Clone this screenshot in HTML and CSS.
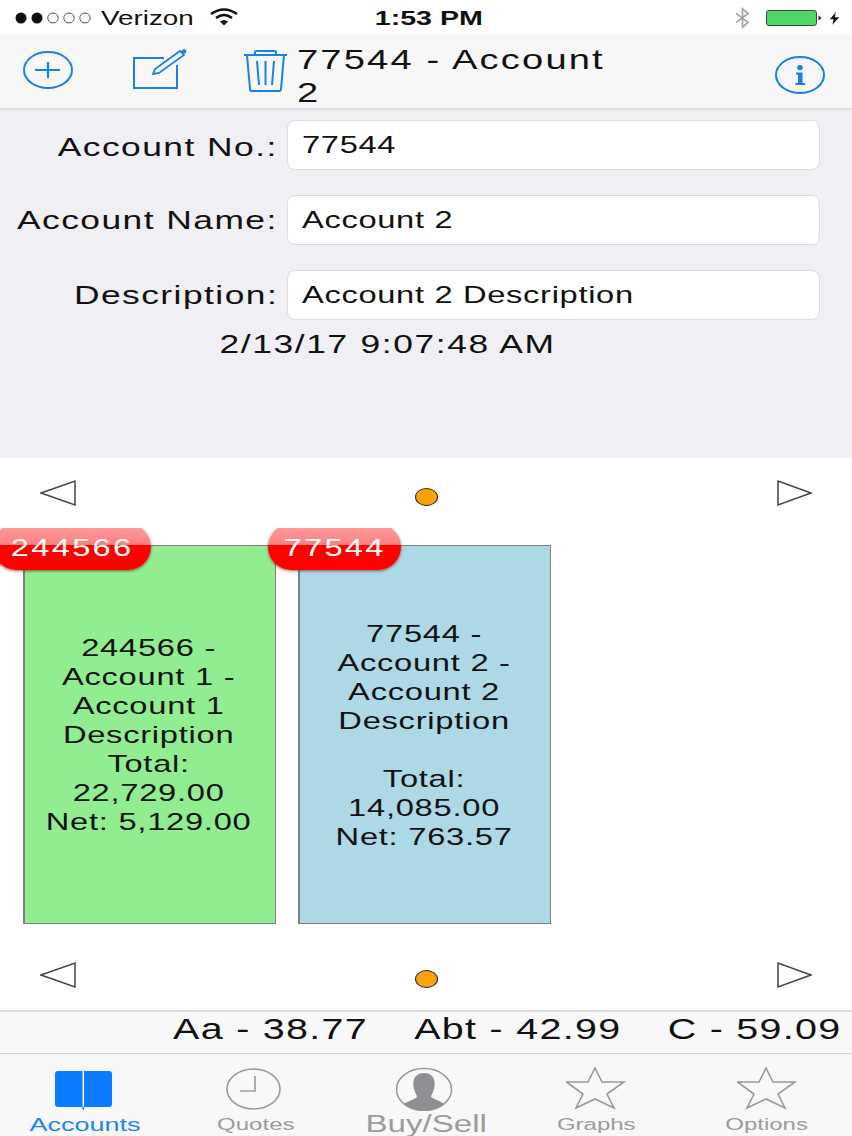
FILE: index.html
```html
<!DOCTYPE html>
<html lang="en">
<head>
<meta charset="utf-8">
<title>Accounts</title>
<link rel="stylesheet" href="styles.css">
</head>
<body>
<div class="app">
  <header class="status">
    <div class="status-left">
      <svg class="signal" width="80" height="14" viewBox="0 0 80 14"><circle cx="7" cy="7" r="5.5" fill="#111"/><circle cx="23" cy="7" r="5.5" fill="#111"/><ellipse cx="39" cy="7" rx="5.2" ry="5" fill="none" stroke="#555"/><ellipse cx="55" cy="7" rx="5.2" ry="5" fill="none" stroke="#555"/><ellipse cx="71" cy="7" rx="5.2" ry="5" fill="none" stroke="#555"/></svg>
      <span class="wide carrier">Verizon</span>
      <svg class="wifi" width="28" height="18" viewBox="0 0 28 18"><path d="M1 6 Q14 -3 27 6" fill="none" stroke="#111" stroke-width="2.6"/><path d="M6 10 Q14 4 22 10" fill="none" stroke="#111" stroke-width="2.6"/><path d="M10 13.5 Q14 10.5 18 13.5 L14 17.5 Z" fill="#111"/></svg>
    </div>
    <span class="wide time">1:53 PM</span>
    <div class="status-right">
      <svg class="bluetooth" width="17" height="22" viewBox="0 0 18 24"><path d="M2 7 L15 17 L9 22 V2 L15 7 L2 17" fill="none" stroke="#a3a3a3" stroke-width="1.8"/></svg>
      <svg class="battery" width="56" height="16" viewBox="0 0 56 16"><rect x="0.500" y="0.500" width="50" height="15" rx="2.5" fill="#4cd964" stroke="#444" stroke-width="1"/><path d="M52.500 5.500 L55.500 8 L52.500 10.500 Z" fill="#222"/></svg>
      <svg class="bolt" width="11" height="15" viewBox="0 0 13 15"><path d="M8 0 L1 8.500 H5.500 L4 15 L12 6 H7 Z" fill="#111"/></svg>
    </div>
  </header>

  <nav class="nav">
    <svg class="nav-plus" width="50" height="38" viewBox="0 0 50 38"><ellipse cx="25" cy="19" rx="24" ry="18" fill="none" stroke="#1b7fe8" stroke-width="2"/><path d="M12 19 H37 M25 11 V27" stroke="#1b7fe8" stroke-width="2.2"/></svg>
    <svg class="nav-edit" width="54" height="40" viewBox="0 0 54 40"><path d="M31 9 H1 V39 H44 V16" fill="none" stroke="#1b7fe8" stroke-width="2"/><path d="M20 25 L22 20 L47 2 L51 6 L26 24 Z" fill="none" stroke="#1b7fe8" stroke-width="1.800"/><circle cx="51" cy="2.500" r="2.300" fill="#1b7fe8"/></svg>
    <svg class="nav-trash" width="45" height="42" viewBox="0 0 45 42"><path d="M1 5 H44 M12 5 V2 Q12 1 14 1 H31 Q33 1 33 2 V5 M4 5 L7 39 Q7 41 9 41 H36 Q38 41 38 39 L41 5 M14 11 L16 35 M22.500 11 V35 M31 11 L29 35" fill="none" stroke="#1b7fe8" stroke-width="2"/></svg>
    <h1 class="wide title">77544 - Account<br>2</h1>
    <svg class="nav-info" width="50" height="38" viewBox="0 0 50 38"><ellipse cx="25" cy="19" rx="24" ry="18" fill="none" stroke="#1b7fe8" stroke-width="2"/><ellipse cx="25" cy="11.500" rx="2.800" ry="2.600" fill="#1b7fe8"/><path d="M21 16.500 H27.500 V27 H30 V29 H20.500 V27 H23 V18.500 H21 Z" fill="#1b7fe8"/></svg>
  </nav>

  <section class="form">
    <div class="form-grid">
      <label class="field-label"><span class="wide label-text">Account No.:</span></label>
      <div class="input"><span class="wide input-text">77544</span></div>
      <label class="field-label second"><span class="wide label-text">Account Name:</span></label>
      <div class="input"><span class="wide input-text">Account 2</span></div>
      <label class="field-label second"><span class="wide label-text">Description:</span></label>
      <div class="input"><span class="wide input-text">Account 2 Description</span></div>
    </div>
    <div class="date"><span class="wide date-text">2/13/17 9:07:48 AM</span></div>
  </section>

  <div class="pager">
    <svg class="arrow" width="36" height="28" viewBox="0 0 36 28"><path d="M1 14 L35 2 V26 Z" fill="none" stroke="#444" stroke-width="1.500"/></svg>
    <span class="dot"></span>
    <svg class="arrow" width="36" height="28" viewBox="0 0 36 28"><path d="M35 14 L2 2 V26 Z" fill="none" stroke="#444" stroke-width="1.500"/></svg>
  </div>

  <section class="cards">
    <article class="card card-green">
      <span class="badge"><span class="wide badge-text">244566</span></span>
      <div class="wide card-text">244566 -<br>Account 1 -<br>Account 1<br>Description<br>Total:<br>22,729.00<br>Net: 5,129.00</div>
    </article>
    <article class="card card-blue">
      <span class="badge badge-short"><span class="wide badge-text">77544</span></span>
      <div class="wide card-text">77544 -<br>Account 2 -<br>Account 2<br>Description<br><br>Total:<br>14,085.00<br>Net: 763.57</div>
    </article>
  </section>

  <div class="pager">
    <svg class="arrow" width="36" height="28" viewBox="0 0 36 28"><path d="M1 14 L35 2 V26 Z" fill="none" stroke="#444" stroke-width="1.500"/></svg>
    <span class="dot"></span>
    <svg class="arrow" width="36" height="28" viewBox="0 0 36 28"><path d="M35 14 L2 2 V26 Z" fill="none" stroke="#444" stroke-width="1.500"/></svg>
  </div>

  <div class="ticker">
    <div class="wide ticker-row"><span>Aa - 38.77</span><span>Abt - 42.99</span><span>C - 59.09</span></div>
  </div>

  <footer class="tabs">
    <div class="tab tab-active">
      <svg width="60" height="44" viewBox="0 0 60 44"><path d="M3 4 Q0 4 0 7 V37 Q0 40 3 40 H27.500 V4 Z M29 4 V40 H54 Q57 40 57 37 V7 Q57 4 54 4 Z" fill="#0a7cff"/><path d="M27 40 H29.500 L28.200 44 Z" fill="#0a7cff"/></svg>
      <span class="wide tab-label">Accounts</span>
    </div>
    <div class="tab">
      <svg width="60" height="44" viewBox="0 0 60 44"><ellipse cx="27.500" cy="22" rx="26.500" ry="20" fill="none" stroke="#999" stroke-width="1.600"/><path d="M14 24 H29 V9" fill="none" stroke="#999" stroke-width="1.600"/></svg>
      <span class="wide tab-label tab-label-small">Quotes</span>
    </div>
    <div class="tab">
      <svg width="60" height="44" viewBox="0 0 60 44"><clipPath id="head"><ellipse cx="28" cy="22.500" rx="27.500" ry="21"/></clipPath><ellipse cx="28" cy="22.500" rx="27.500" ry="21" fill="none" stroke="#999" stroke-width="1.600"/><path clip-path="url(#head)" d="M28 6 C38 6 40 14 38 22 C37 26 35 28 35 30 C40 34 50 34 52 44 H4 C6 34 17 34 21 30 C21 28 19 26 18 22 C16 14 18 6 28 6 Z" fill="#8e8e93"/></svg>
      <span class="wide tab-label tab-label-big">Buy/Sell</span>
    </div>
    <div class="tab">
      <svg width="60" height="44" viewBox="0 0 60 44"><path d="M29 1 L36 15 L58 15 L41 27 L48 41 L29 32 L10 41 L17 27 L0.500 15 L22 15 Z" fill="none" stroke="#999" stroke-width="1.600"/></svg>
      <span class="wide tab-label tab-label-small">Graphs</span>
    </div>
    <div class="tab">
      <svg width="60" height="44" viewBox="0 0 60 44"><path d="M29 1 L36 15 L58 15 L41 27 L48 41 L29 32 L10 41 L17 27 L0.500 15 L22 15 Z" fill="none" stroke="#999" stroke-width="1.600"/></svg>
      <span class="wide tab-label tab-label-small">Options</span>
    </div>
  </footer>
</div>
</body>
</html>
```
FILE: styles.css
```css
* { box-sizing: border-box; }
html, body { margin: 0; padding: 0; background: #fff; }
body { font-family: "Liberation Sans", Arial, sans-serif; color: #111; }

.app { width: 852px; height: 1136px; display: flex; flex-direction: column; overflow: hidden; }
.wide { display: inline-block; transform: scaleX(1.36); white-space: nowrap; }

.status { height: 34px; flex: none; display: grid; grid-template-columns: 1fr auto 1fr; align-items: center; background: #fff; padding: 2px 12px 0 14px; }
.status-left { display: flex; align-items: center; }
.signal { flex: none; }
.carrier { font-size: 20px; margin-left: 7px; transform-origin: left center; transform: scaleX(1.39); }
.wifi { margin-left: 42px; margin-top: -2px; }
.time { font-size: 20px; font-weight: 700; margin-left: 4px; transform: scaleX(1.43); }
.status-right { display: flex; align-items: center; justify-content: flex-end; }
.bluetooth { flex: none; margin-right: 15px; }
.battery { flex: none; margin-right: 7px; }
.bolt { flex: none; }

.nav { height: 76px; flex: none; display: flex; align-items: center; background: #f7f7f8; border-bottom: 2px solid #dcdcdf; padding: 0 27px 0 23px; }
.nav-plus { flex: none; margin-top: -2px; }
.nav-edit { flex: none; margin-left: 60px; margin-top: -4px; }
.nav-trash { flex: none; margin-left: 56px; }
.title { margin: 10px 0 0 9px; font-size: 28px; font-weight: 400; line-height: 33px; letter-spacing: 1.6px; transform-origin: left center; }
.nav-info { flex: none; margin-left: auto; margin-top: 8px; }

.form { height: 348px; flex: none; background: #efeff4; padding-top: 10px; }
.form-grid { display: grid; grid-template-columns: 277px 533px; column-gap: 10px; row-gap: 25px; }
.field-label { display: flex; align-items: center; justify-content: flex-end; height: 50px; padding-top: 4px; }
.field-label.second { padding-top: 0; }
.label-text { font-size: 26px; letter-spacing: 1.08px; margin-right: -1px; transform-origin: right center; }
.input { height: 50px; background: #fff; border: 1px solid #dcdcdf; border-radius: 8px; display: flex; align-items: center; padding-left: 14px; }
.input-text { font-size: 24px; letter-spacing: 0.5px; transform-origin: left center; }
.date { width: 776px; text-align: center; margin-top: 9px; }
.date-text { font-size: 26px; letter-spacing: 1.2px; }

.pager { height: 70px; flex: none; display: flex; justify-content: space-between; align-items: flex-start; padding: 21px 40px 0; background: #fff; }
.arrow { flex: none; }
.dot { width: 23px; height: 18px; border-radius: 50%; background: #f8a30c; border: 1px solid #222; margin-top: 9px; }

.cards { height: 412px; flex: none; display: flex; gap: 22px; padding: 17px 0 16px 23px; overflow: hidden; background: #fff; }
.card { position: relative; width: 253px; height: 379px; border: 1px solid #808080; border-left-width: 2px; padding-right: 2px; display: flex; align-items: center; justify-content: center; text-align: center; }
.card-green { background: #90ee90; }
.card-blue { background: #add8e6; }
.card-text { font-size: 24px; line-height: 29px; letter-spacing: 0.55px; color: #111; }

.badge { position: absolute; left: -32px; top: -22px; width: 158px; height: 46px; border-radius: 23px; display: flex; align-items: center; justify-content: center; padding-top: 2px; color: #fff; background: linear-gradient(#ffa0a0 0, #fb7f7f 21px, #f00 21px, #f00 100%); box-shadow: 0 1px 3px rgba(90,0,0,.6); }
.badge-short { width: 133px; }
.badge-text { font-size: 24px; letter-spacing: 1.7px; }

.ticker { height: 44px; flex: none; display: flex; justify-content: flex-end; align-items: center; padding: 0 11px 6px 0; background: #f8f8f9; border-top: 2px solid #dcdcdf; border-bottom: 1px solid #d0d0d3; }
.ticker-row { display: flex; gap: 34px; font-size: 29px; letter-spacing: 0.95px; transform-origin: right center; }

.tabs { flex: 1; display: flex; background: #f8f8f9; padding-top: 13px; }
.tab { flex: 1; display: flex; flex-direction: column; align-items: center; }
.tab-label { font-size: 18px; line-height: 22px; color: #9c9c9c; margin-top: 3px; transform: scaleX(1.5); }
.tab-active .tab-label { color: #1b86f0; }
.tab-label-small { font-size: 16px; }
.tab-label-big { font-size: 23px; margin-top: 2px; line-height: 23px; transform: scaleX(1.44); }
```
